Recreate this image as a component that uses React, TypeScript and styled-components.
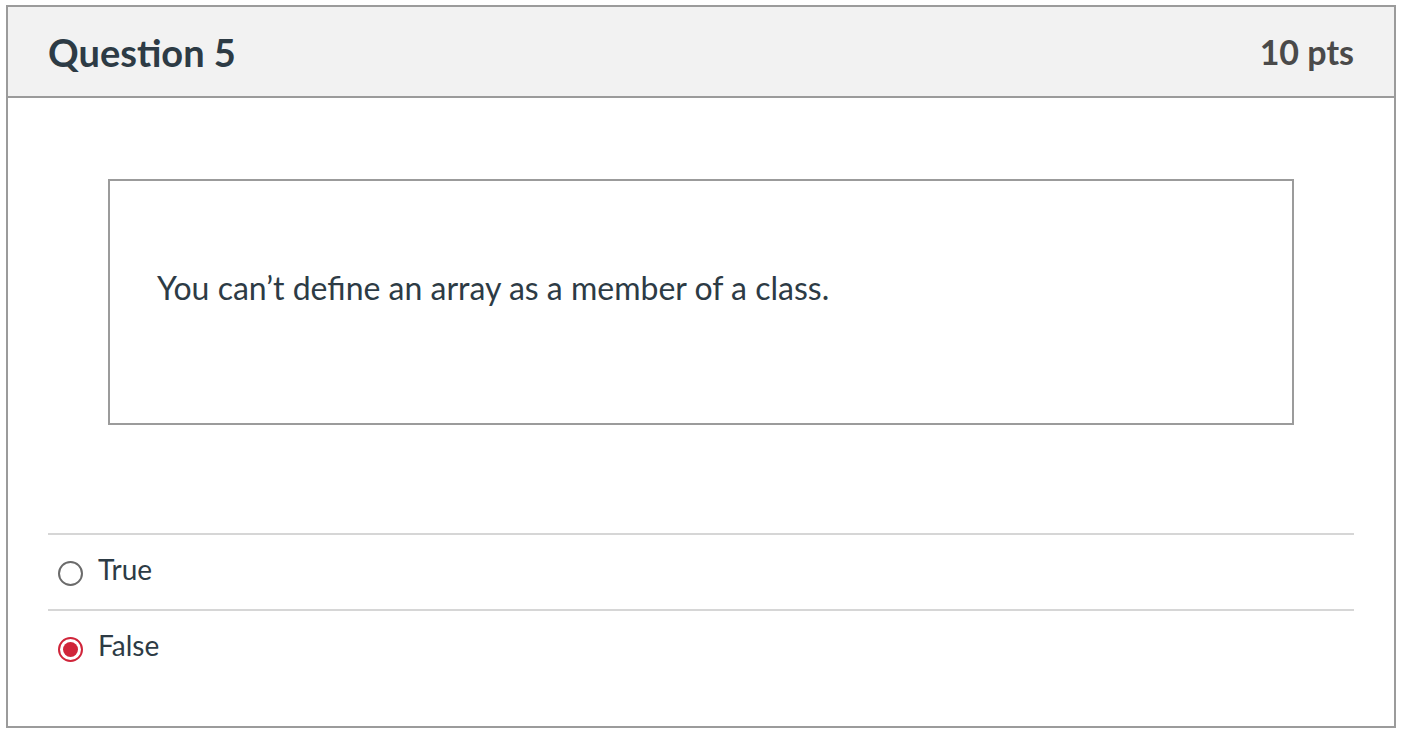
import React, { useState } from 'react';
import styled, { createGlobalStyle } from 'styled-components';

const GlobalStyle = createGlobalStyle`
  body {
    margin: 0;
    background: #fff;
    font-family: Lato, "Open Sans", sans-serif;
    color: #2d3b45;
  }
`;

const Card = styled.section`
  margin: 5px 0 0 6px;
  width: 1390px;
  box-sizing: border-box;
  border: 2px solid #9b9b9b;
  background: #fff;
`;

const Header = styled.header`
  display: flex;
  align-items: center;
  justify-content: space-between;
  height: 89px;
  padding: 0 40px;
  background: #f2f2f2;
  border-bottom: 2px solid #9b9b9b;
`;

const Title = styled.h2`
  margin: 0;
  font-size: 38px;
  font-weight: 700;
  color: #2d3b45;
`;

const Points = styled.span`
  font-size: 34px;
  font-weight: 700;
  color: #4a4a4a;
`;

const Body = styled.div`
  padding: 81px 40px 41px;
`;

const QuestionText = styled.div`
  margin: 0 60px 108px;
  height: 246px;
  box-sizing: border-box;
  border: 2px solid #9b9b9b;
  padding: 86px 47px 0;
  font-size: 32px;
  line-height: 42px;
`;

const Answers = styled.fieldset`
  margin: 0;
  padding: 0;
  border: none;
`;

const Answer = styled.label`
  display: flex;
  align-items: center;
  gap: 15px;
  height: 76px;
  box-sizing: border-box;
  padding-bottom: 6px;
  border-top: 2px solid #d6d6d6;
  font-size: 28px;
  cursor: pointer;
`;

const Radio = styled.span<{ $checked: boolean }>`
  position: relative;
  width: 25px;
  height: 25px;
  margin: 8px 0 0 10px;
  box-sizing: border-box;
  border-radius: 50%;
  border: 2px solid ${({ $checked }) => ($checked ? '#d0253a' : '#6b6b6b')};
  background: #fff;
  &::after {
    content: '';
    display: ${({ $checked }) => ($checked ? 'block' : 'none')};
    position: absolute;
    inset: 3px;
    border-radius: 50%;
    background: #d0253a;
  }
`;

const HiddenInput = styled.input`
  display: none;
`;

const answers = ['True', 'False'];

const App = () => {
  const [choice, setChoice] = useState('False');

  return (
    <>
      <GlobalStyle />
      <Card>
        <Header>
          <Title>Question 5</Title>
          <Points>10 pts</Points>
        </Header>
        <Body>
          <QuestionText>You can’t define an array as a member of a class.</QuestionText>
          <Answers>
            {answers.map((a) => (
              <Answer key={a}>
                <HiddenInput
                  type="radio"
                  name="q5"
                  checked={choice === a}
                  onChange={() => setChoice(a)}
                />
                <Radio $checked={choice === a} />
                {a}
              </Answer>
            ))}
          </Answers>
        </Body>
      </Card>
    </>
  );
};

export default App;
